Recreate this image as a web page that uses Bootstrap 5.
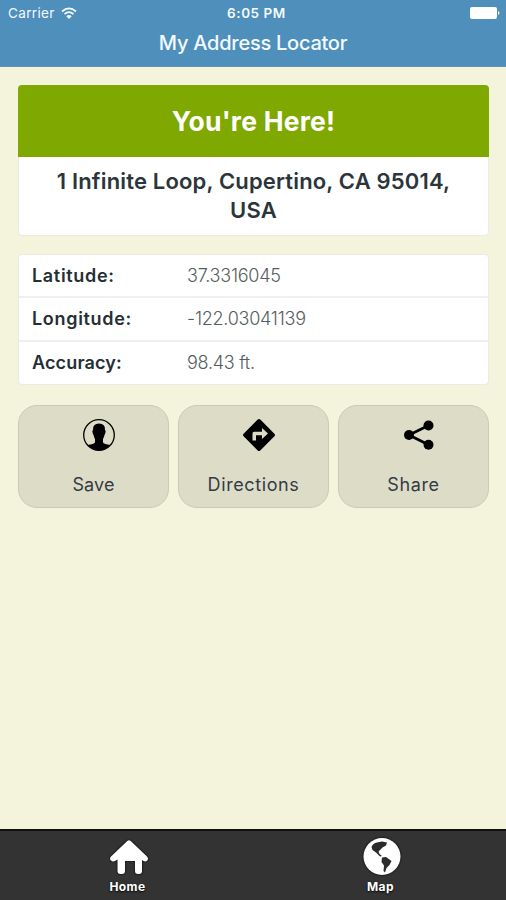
<!DOCTYPE html>
<html lang="en">
<head>
<meta charset="utf-8">
<meta name="viewport" content="width=device-width, initial-scale=1">
<title>My Address Locator</title>
<link rel="stylesheet" href="https://cdn.jsdelivr.net/npm/bootstrap@5.3.0/dist/css/bootstrap.min.css">
<style>
body{background:#f4f4dc;color:#2c3539;font-family:Inter,"Open Sans",sans-serif;overflow:hidden}
svg{display:block;flex:none}
.topbar{height:67px;background:#4f8fbc;color:#f4faff;border-bottom:1px solid #5f94b4}
.status{height:26px;padding:0 6px 0 8px;font-size:13px;line-height:24px}
.status>*{flex:1 1 0}
.carrier{font-size:13.5px;letter-spacing:.35px}
.carrier svg{margin-left:6px}
.clock{font-size:13.5px;font-weight:600;letter-spacing:.55px;padding-left:5px}
.app-title{font-size:20px;line-height:24px;font-weight:500;margin-top:5px;letter-spacing:-.25px}
.content{padding:18px 17px 0 18px}
.panel{border-radius:4px;border:1px solid #e9ebe4;background:#fff}
.place{height:151px}
.here{height:72px;margin:-1px -1px 0;border-radius:4px 4px 0 0;background:#7fa800;color:#fff;font-size:26.5px;font-weight:700;line-height:73px;letter-spacing:.2px}
.address{font-size:22px;line-height:29px;font-weight:600;padding:10px 20px 0;letter-spacing:.17px}
.facts{height:131px;margin-top:18px}
.fact{height:41px;padding:0 13px;font-size:18px}
.fact+.fact{height:44px;border-top:2px solid #eeeff0;padding-bottom:1px}
.fact dt{width:155px;font-weight:600;color:#252f34;letter-spacing:.68px}
.fact:last-child dt{letter-spacing:.15px}
.fact dd{font-weight:300;color:#555d60;letter-spacing:-.25px}
.actions{gap:9px;margin-top:20px}
.action{height:103px;border:1px solid #cbcbb4;border-radius:19px;background:#ddddc7;color:#343b46;font-size:18px;line-height:24px;padding:13px 0 0;letter-spacing:.6px}
.action svg{margin:0 0 22px 11px}
.action:first-child{letter-spacing:.1px}
.tabs{height:71px;background:#333;border-top:2px solid #111;color:#fff;font-size:12px;font-weight:700;line-height:16px;letter-spacing:.4px}
.tabs a{padding-top:6px;text-shadow:0 1px 2px #000}
.tabs span{margin-left:2px}
.tabs svg{margin-bottom:2px;filter:drop-shadow(0 0 1px #000)}
</style>
</head>
<body class="d-flex flex-column vh-100">
<header class="topbar">
  <div class="status d-flex align-items-center">
    <div class="carrier d-flex align-items-center"><span>Carrier</span>
      <svg width="16" height="12" viewBox="0 0 16 12" fill="none" stroke="#f4faff" stroke-width="1.8"><path d="M1 4.5Q8-1.8 15 4.5M3.5 7.2Q8 3 12.5 7.2"/><path d="M8 12 5.3 9.2Q8 6.9 10.7 9.2Z" fill="#f4faff" stroke="none"/></svg>
    </div>
    <div class="clock text-center"><span>6:05 PM</span></div>
    <div><svg class="ms-auto" width="30" height="12" viewBox="0 0 30 12" fill="#fff"><rect width="27" height="12" rx="2"/><path d="M28 4q3 2 0 4Z"/></svg></div>
  </div>
  <h1 class="app-title text-center mb-0">My Address Locator</h1>
</header>
<main class="content flex-grow-1">
  <section class="panel place text-center">
    <h2 class="here">You're Here!</h2>
    <p class="address mb-0">1 Infinite Loop, Cupertino, CA 95014,<br>USA</p>
  </section>
  <dl class="panel facts mb-0">
    <div class="fact d-flex align-items-center"><dt>Latitude:</dt><dd class="mb-0">37.3316045</dd></div>
    <div class="fact d-flex align-items-center"><dt>Longitude:</dt><dd class="mb-0">-122.03041139</dd></div>
    <div class="fact d-flex align-items-center"><dt>Accuracy:</dt><dd class="mb-0">98.43 ft.</dd></div>
  </dl>
  <div class="actions d-flex">
    <button class="action flex-fill w-100 d-flex flex-column align-items-center">
      <svg width="32" height="32" viewBox="0 0 32 32"><circle cx="16" cy="16" r="15.3" fill="none" stroke="#000" stroke-width="1.3"/><path d="M10 11Q9.500 4.500 16 4.500T22 11Q23.500 12 21.500 16Q21 18.500 20 20V23.500Q21 25 27.500 26Q22.500 31.300 16 31.300T4.500 26Q11 25 12 23.500V20Q11 18.500 10.500 16Q8.500 12 10 11Z"/></svg>
      <span>Save</span></button>
    <button class="action flex-fill w-100 d-flex flex-column align-items-center">
      <svg width="32" height="32" viewBox="0 0 32 32"><path fill-rule="evenodd" d="M14.700.6Q16-.6 17.300.6L31.400 14.700Q32.600 16 31.400 17.300L17.300 31.400Q16 32.600 14.700 31.400L.6 17.300Q-.6 16 .6 14.700ZM9.500 21.500H13V16.300H19V20L25 14.500 19 9V12.800H11Q9.500 12.800 9.500 14.300Z"/></svg>
      <span>Directions</span></button>
    <button class="action flex-fill w-100 d-flex flex-column align-items-center">
      <svg width="32" height="32" viewBox="0 0 32 32"><path d="M25.500 6.500 6 16 25.500 25.700" fill="none" stroke="#000" stroke-width="2.800"/><circle cx="25.500" cy="6.500" r="5"/><circle cx="6" cy="16" r="5"/><circle cx="25.500" cy="25.700" r="5"/></svg>
      <span>Share</span></button>
  </div>
</main>
<nav class="tabs d-flex">
  <a class="w-50 d-flex flex-column align-items-center text-reset text-decoration-none" href="#">
    <svg class="ms-1" width="40" height="40" viewBox="0 0 40 40" fill="#fff"><path d="M18.300 4Q20 2.400 21.700 4L38 19.500Q40 22 38 23.800Q36.500 25 34 23.800L33 23V34Q33 37 30 37H29Q26 37 26 34V24H16V34Q16 37 13 37H11.500Q8.500 37 8.500 34V22.500L6 24Q3.500 25 2 23.500Q0 22 2 19.500Z"/></svg>
    <span>Home</span></a>
  <a class="w-50 d-flex flex-column align-items-center text-reset text-decoration-none" href="#">
    <svg class="ms-1" width="40" height="40" viewBox="0 0 40 40"><circle cx="20" cy="19.500" r="18.500" fill="#fff"/><path fill="#2b2b2b" d="M9.500 10Q11 6 15 5.500L20 4.500 25 5.500 24 8.500 20.500 10.500 18 13 16.500 14.500 17.500 17 20 19 18 19.500 14 15.500 10.500 13ZM20 20.500 24 20 29.500 24 27.500 28 24.500 31 23 35.500 21.500 34 22 28.500 19.500 25Z"/></svg>
    <span>Map</span></a>
</nav>
<script src="https://cdn.jsdelivr.net/npm/bootstrap@5.3.0/dist/js/bootstrap.bundle.min.js"></script>
</body>
</html>
